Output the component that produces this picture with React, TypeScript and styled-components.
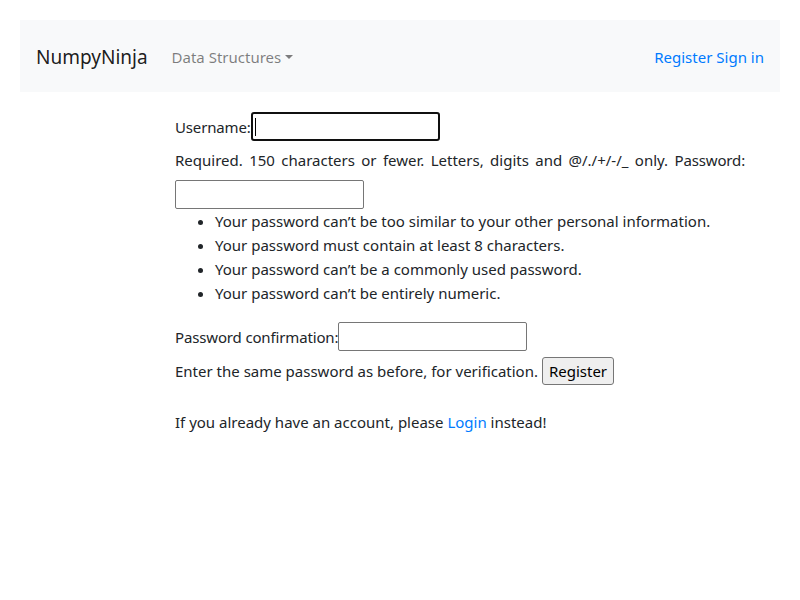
import React from "react";
import styled, { createGlobalStyle } from "styled-components";

const Global = createGlobalStyle`
  html, body { margin: 0; padding: 0; background: #fff; }
  body {
    font-family: "Noto Sans", "Open Sans", sans-serif;
    font-size: 15px;
    line-height: 24px;
    color: #212529;
  }
`;

const Page = styled.div`
  padding: 20px;
`;

const Navbar = styled.nav`
  height: 72px;
  background: #f8f9fa;
  display: flex;
  align-items: center;
  padding: 1px 16px 0;
  box-sizing: border-box;
`;

const Brand = styled.a`
  font-size: 19px;
  color: rgba(0, 0, 0, 0.9);
  text-decoration: none;
  margin-right: 24px;
`;

const NavItem = styled.a`
  color: rgba(0, 0, 0, 0.5);
  text-decoration: none;
  display: flex;
  align-items: center;
  &::after {
    content: "";
    display: inline-block;
    margin-left: 4px;
    border-top: 4.8px solid;
    border-right: 4.8px solid transparent;
    border-left: 4.8px solid transparent;
    margin-top: 1px;
  }
`;

const Right = styled.div`
  margin-left: auto;
  display: flex;
  gap: 4px;
`;

const NavLink = styled.a`
  color: #007bff;
  text-decoration: none;
`;

const Main = styled.main`
  padding: 20px 15px 0 155px;
  width: 570px;
`;

const Para = styled.p<{ $justify?: boolean; $mb?: number }>`
  margin: 0 0 ${(p) => (p.$mb ?? 16)}px;
  text-align: ${(p) => (p.$justify ? "justify" : "left")};
`;

const Label = styled.label`
  letter-spacing: -0.15px;
`;

const FieldWrap = styled.span<{ $mt?: number; $mb?: number }>`
  position: relative;
  display: inline-block;
  margin: ${(p) => p.$mt ?? 0}px 0 ${(p) => p.$mb ?? 0}px;
`;

const Caret = styled.span`
  position: absolute;
  left: 4px;
  top: 6px;
  width: 1px;
  height: 18px;
  background: #000;
`;

const Field = styled.input<{ $focused?: boolean }>`
  display: block;
  width: 189px;
  height: 29px;
  box-sizing: border-box;
  font: inherit;
  padding: 1px 2px;
  border: ${(p) => (p.$focused ? "2px solid #101010" : "1px solid #767676")};
  border-radius: ${(p) => (p.$focused ? "3px" : "2px")};
  outline: none;
  background: #fff;
  caret-color: transparent;
`;

const HelpList = styled.ul`
  margin: 0 0 17px;
  padding-left: 40px;
  li { line-height: 24px; }
`;

const Button = styled.button`
  font: inherit;
  color: #000;
  height: 28px;
  padding: 0 6px;
  margin: 6px 0 9px;
  background: #efefef;
  border: 1px solid #767676;
  border-radius: 3px;
`;

const Link = styled.a`
  color: #007bff;
  text-decoration: none;
`;

export default function App() {
  return (
    <Page>
      <Global />
      <Navbar>
        <Brand href="#">NumpyNinja</Brand>
        <NavItem href="#">Data Structures</NavItem>
        <Right>
          <NavLink href="#">Register</NavLink>
          <NavLink href="#">Sign in</NavLink>
        </Right>
      </Navbar>
      <Main>
        <Para $justify $mb={0}>
          <Label>Username:</Label>
          <FieldWrap $mb={7}>
            <Field type="text" $focused autoFocus />
            <Caret />
          </FieldWrap>
          <br />
          <span>Required. 150 characters or fewer. Letters, digits and @/./+/-/_ only.</span>{" "}
          <Label>Password:</Label>
          <FieldWrap $mt={8}>
            <Field type="password" />
          </FieldWrap>
        </Para>
        <HelpList>
          <li>Your password can’t be too similar to your other personal information.</li>
          <li>Your password must contain at least 8 characters.</li>
          <li>Your password can’t be a commonly used password.</li>
          <li>Your password can’t be entirely numeric.</li>
        </HelpList>
        <Para>
          <Label>Password confirmation:</Label>
          <FieldWrap>
            <Field type="password" />
          </FieldWrap>
          <br />
          <span>Enter the same password as before, for verification.</span>{" "}
          <Button type="button">Register</Button>
        </Para>
        <Para>
          If you already have an account, please <Link href="#">Login</Link> instead!
        </Para>
      </Main>
    </Page>
  );
}
